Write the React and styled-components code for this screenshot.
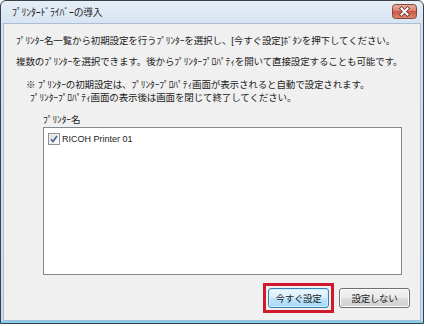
import React from "react";
import styled, { createGlobalStyle } from "styled-components";

const GlobalStyle = createGlobalStyle`
  body {
    margin: 0;
    background: #ffffff;
    font-family: "Liberation Sans", "Noto Sans CJK JP", sans-serif;
  }
`;

const Window = styled.div`
  width: 424px;
  height: 324px;
  box-sizing: border-box;
  border: 1px solid #3b4047;
  border-radius: 6px 6px 0 0;
  background: linear-gradient(#e6eef7, #d6e3f2 24px, #c9dcf0);
  box-shadow: inset 0 -2px 0 #7fd0ee;
  padding: 0 2px 2px;
  display: flex;
  flex-direction: column;
`;

const TitleBar = styled.div`
  height: 22px;
  display: flex;
  align-items: center;
  justify-content: space-between;
  padding: 0 4px 0 9px;
`;

const Title = styled.span`
  font-size: 9.8px;
  letter-spacing: -0.2px;
  color: #1e1e1e;
`;

const CloseButton = styled.div`
  width: 25px;
  height: 15px;
  margin-top: -2px;
  display: flex;
`;

const Client = styled.div`
  flex: 1;
  background: #f0f0f0;
  border: 1px solid #aabdd4;
  padding: 10px 10px 6px 12px;
  display: flex;
  flex-direction: column;
  font-size: 9.5px;
  letter-spacing: -0.12px;
  color: #1b1b1b;
`;

const Message = styled.p`
  margin: ${(p) => p.$top || 0}px 0 0;
  line-height: 13px;
  white-space: nowrap;
`;

const Note = styled.p`
  margin: 10px 0 0;
  padding-left: 14px;
  text-indent: -4px;
  line-height: 13px;
  white-space: nowrap;
`;

const Label = styled.div`
  margin: 9px 0 1px 27px;
  line-height: 13px;
`;

const ListBox = styled.div`
  margin-left: 27px;
  width: 359px;
  height: 148px;
  box-sizing: border-box;
  border: 1px solid #828790;
  background: #ffffff;
  padding: 4px 4px;
`;

const ListItem = styled.div`
  display: flex;
  align-items: center;
  gap: 2px;
  height: 14px;
  letter-spacing: 0;
  font-size: 9px;
`;

const Footer = styled.div`
  margin-top: 8px;
  display: flex;
  justify-content: flex-end;
  align-items: center;
  gap: 5px;
`;

const Highlight = styled.div`
  display: flex;
  border: 3px solid #d0182e;
  padding: 2px;
`;

const Button = styled.button`
  width: ${(p) => p.$width}px;
  height: 20px;
  box-sizing: border-box;
  padding: 0;
  font-family: inherit;
  font-size: 9.5px;
  letter-spacing: -0.3px;
  color: #1b1b1b;
  border-radius: 3px;
  border: 1px solid ${(p) => (p.$primary ? "#3c7fb1" : "#707070")};
  background: ${(p) =>
    p.$primary
      ? "linear-gradient(#eaf6fd, #d9f0fc 50%, #bee6fd 50%, #a7d9f5)"
      : "linear-gradient(#f2f2f2, #ebebeb 50%, #dddddd 50%, #cfcfcf)"};
  box-shadow: inset 0 0 0 1px ${(p) => (p.$primary ? "#cdeefc" : "#fcfcfc")};
`;

const CloseIcon = () => (
  <svg width="25" height="15" viewBox="0 0 25 15">
    <defs>
      <linearGradient id="cl" x1="0" y1="0" x2="0" y2="1">
        <stop offset="0" stopColor="#eab0a4" />
        <stop offset="0.5" stopColor="#d87c6a" />
        <stop offset="0.5" stopColor="#c95a46" />
        <stop offset="1" stopColor="#dc8a70" />
      </linearGradient>
    </defs>
    <rect x="0.5" y="0.5" width="24" height="14" rx="3" fill="url(#cl)" stroke="#8a463c" />
    <path d="M9.5 4.5l6 6M15.5 4.5l-6 6" stroke="#6a342c" strokeWidth="3.6" strokeLinecap="square" />
    <path d="M9.5 4.5l6 6M15.5 4.5l-6 6" stroke="#ffffff" strokeWidth="2" strokeLinecap="square" />
  </svg>
);

const CheckIcon = () => (
  <svg width="12" height="12" viewBox="0 0 12 12">
    <defs>
      <linearGradient id="cb" x1="0" y1="0" x2="1" y2="1">
        <stop offset="0" stopColor="#dcdcdc" />
        <stop offset="1" stopColor="#fbfbfb" />
      </linearGradient>
    </defs>
    <rect x="0.5" y="0.5" width="11" height="11" fill="#f4f4f4" stroke="#8e8f8f" />
    <rect x="2" y="2" width="8" height="8" fill="url(#cb)" />
    <path d="M3 6.2l2 2.3 4-5.5" fill="none" stroke="#4a5f97" strokeWidth="1.6" />
  </svg>
);

export default function App() {
  return (
    <>
      <GlobalStyle />
      <Window>
        <TitleBar>
          <Title>ﾌﾟﾘﾝﾀｰﾄﾞﾗｲﾊﾞｰの導入</Title>
          <CloseButton>
            <CloseIcon />
          </CloseButton>
        </TitleBar>
        <Client>
          <Message>
            ﾌﾟﾘﾝﾀｰ名一覧から初期設定を行うﾌﾟﾘﾝﾀｰを選択し、[今すぐ設定]ﾎﾞﾀﾝを押下してください。
          </Message>
          <Message $top={8}>
            複数のﾌﾟﾘﾝﾀｰを選択できます。後からﾌﾟﾘﾝﾀｰﾌﾟﾛﾊﾟﾃｨを開いて直接設定することも可能です。
          </Message>
          <Note>
            ※ ﾌﾟﾘﾝﾀｰの初期設定は、ﾌﾟﾘﾝﾀｰﾌﾟﾛﾊﾟﾃｨ画面が表示されると自動で設定されます。
            <br />
            ﾌﾟﾘﾝﾀｰﾌﾟﾛﾊﾟﾃｨ画面の表示後は画面を閉じて終了してください。
          </Note>
          <Label>ﾌﾟﾘﾝﾀｰ名</Label>
          <ListBox>
            <ListItem>
              <CheckIcon />
              <span>RICOH Printer 01</span>
            </ListItem>
          </ListBox>
          <Footer>
            <Highlight>
              <Button $primary $width={61}>今すぐ設定</Button>
            </Highlight>
            <Button $width={71}>設定しない</Button>
          </Footer>
        </Client>
      </Window>
    </>
  );
}
